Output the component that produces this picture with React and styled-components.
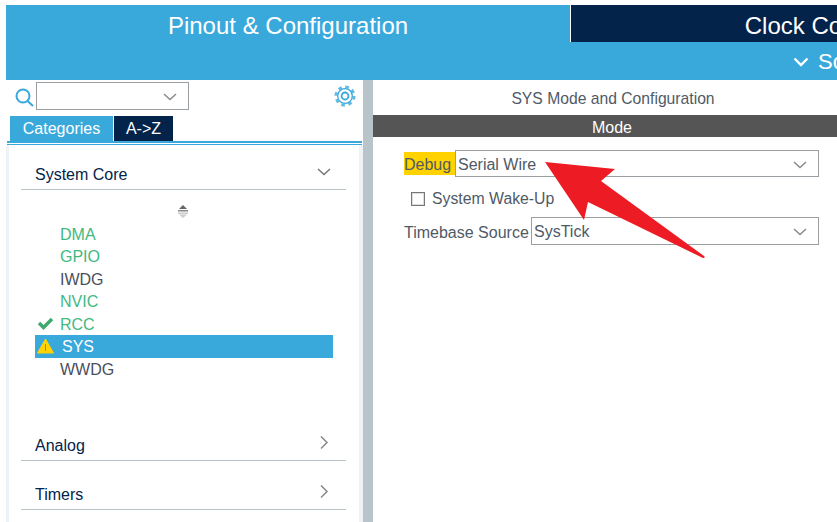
import styled, { createGlobalStyle } from "styled-components";

const GlobalStyle = createGlobalStyle`
  html, body {
    margin: 0;
    padding: 0;
    background: #fff;
    overflow: hidden;
  }
  * {
    box-sizing: border-box;
  }
`;

const BLUE = "#39a9dc";
const NAVY = "#03234b";
const GREY_TEXT = "#4f5a66";

const Page = styled.div`
  position: relative;
  width: 837px;
  height: 522px;
  overflow: hidden;
  padding-top: 5px;
  display: flex;
  flex-direction: column;
  font-family: "Liberation Sans", Arial, sans-serif;
  font-size: 16px;
`;

const Header = styled.header`
  margin-left: 6px;
  background: ${BLUE};
  height: 75px;
  flex-shrink: 0;
`;

const TabBar = styled.div`
  display: flex;
  height: 37px;
`;

const MainTab = styled.div`
  flex: 0 0 ${({ $width }) => $width}px;
  display: flex;
  justify-content: center;
  align-items: center;
  padding-top: 5px;
  color: #fff;
  font-size: 24px;
  white-space: nowrap;
  background: ${({ $active }) => ($active ? BLUE : NAVY)};
  border-left: ${({ $active }) => ($active ? "0" : "1px solid #fff")};
`;

const SubBar = styled.div`
  height: 38px;
  display: flex;
  align-items: center;
  gap: 9px;
  padding: 1px 0 0 787px;
  color: #fff;
  font-size: 22px;
  white-space: nowrap;
`;

const SubChevron = styled.svg`
  width: 16px;
  height: 10px;
  flex-shrink: 0;
`;

const Body = styled.div`
  flex: 1;
  display: flex;
  min-height: 0;
`;

const Sidebar = styled.aside`
  width: 363px;
  padding-left: 6px;
  display: flex;
  flex-direction: column;
`;

const SearchRow = styled.div`
  height: 36px;
  display: flex;
  align-items: flex-start;
  padding: 2px 7px 0 9px;
`;

const SearchIcon = styled.svg`
  width: 19px;
  height: 19px;
  margin-top: 6px;
  margin-right: 2px;
  flex-shrink: 0;
`;

const Select = styled.div`
  height: ${({ $height }) => $height}px;
  width: ${({ $width }) => $width}px;
  flex: none;
  border: 1px solid #9a9fa3;
  display: flex;
  align-items: center;
  justify-content: space-between;
  padding: 2px 11px 0 2px;
  color: ${GREY_TEXT};
  background: #fff;
`;

const Chevron = styled.svg`
  width: 14px;
  height: 8px;
  flex-shrink: 0;
`;

const GearIcon = styled.svg`
  width: 22px;
  height: 22px;
  margin-left: auto;
  margin-top: 3px;
`;

const ViewTabs = styled.div`
  display: flex;
  gap: 1px;
  height: 25px;
  padding-left: 4px;
`;

const ViewTab = styled.div`
  width: ${({ $width }) => $width}px;
  display: flex;
  align-items: center;
  justify-content: center;
  color: #fff;
  background: ${({ $active }) => ($active ? BLUE : NAVY)};
`;

const TabRule = styled.div`
  height: 4px;
  margin: 0 1px;
  border-top: 2px solid ${BLUE};
  border-bottom: 1px solid ${BLUE};
`;

const Tree = styled.div`
  flex: 1;
  display: flex;
  flex-direction: column;
  padding: 0 13px 0 12px;
  border-left: 3px solid #eff2f4;
  border-right: 4px solid #eff2f4;
`;

const Category = styled.div`
  height: 34px;
  flex-shrink: 0;
  margin-top: ${({ $gap }) => $gap}px;
  padding: 9px 15px 0 14px;
  display: flex;
  align-items: flex-start;
  justify-content: space-between;
  border-bottom: 1px solid #b8c4ca;
  color: ${NAVY};
  line-height: 20px;
`;

const CategoryIcon = styled.svg`
  width: 14px;
  height: 14px;
`;

const SortIcon = styled.svg`
  display: block;
  width: 12px;
  height: 15px;
  margin: 14px auto 3.5px;
  transform: translateX(-1px);
`;

const ItemList = styled.ul`
  list-style: none;
  margin: 0 13px 0 14px;
  padding: 0;
`;

const Item = styled.li`
  position: relative;
  height: 22.5px;
  display: flex;
  align-items: center;
  padding-top: 2px;
  padding-left: ${({ $selected }) => ($selected ? "27px" : "25px")};
  background: ${({ $selected }) => ($selected ? BLUE : "transparent")};
  color: ${({ $selected, $ok }) =>
    $selected ? "#fff" : $ok ? "#3fb97f" : "#4a4f5e"};
`;

const StatusIcon = styled.svg`
  position: absolute;
  left: 2px;
  top: 3px;
  width: 17px;
  height: 16px;
`;

const Splitter = styled.div`
  width: 10px;
  background: #b8c4ca;
`;

const Content = styled.main`
  flex: 1;
  min-width: 0;
  display: flex;
  flex-direction: column;
  color: ${GREY_TEXT};
`;

const PanelTitle = styled.div`
  height: 35px;
  display: flex;
  align-items: center;
  justify-content: center;
  padding: 2px 0 0 16px;
  font-size: 15.7px;
`;

const ModeBar = styled.div`
  height: 22px;
  display: flex;
  align-items: center;
  justify-content: center;
  padding: 3px 0 0 14px;
  background: #545554;
  color: #fff;
`;

const Form = styled.div`
  display: flex;
  flex-direction: column;
  padding: 13px 18px 0 31px;
`;

const FieldRow = styled.div`
  display: flex;
  align-items: center;
  justify-content: space-between;
`;

const Label = styled.span`
  padding: 4px 0 2px;
  height: 23px;
  line-height: 18px;
  white-space: nowrap;
  background: ${({ $highlight }) => ($highlight ? "#ffd200" : "transparent")};
  width: ${({ $highlight }) => ($highlight ? "51px" : "auto")};
`;

const CheckRow = styled.label`
  display: flex;
  align-items: center;
  gap: 7px;
  height: 40px;
  padding: 3px 0 0 7px;
  font-size: 15.8px;
`;

const CheckBox = styled.span`
  width: 14px;
  height: 14px;
  border: 1px solid #777;
  background: #fff;
  box-shadow: inset 0 0 0 1px #ddd;
`;

const Arrow = styled.svg`
  position: absolute;
  left: 540px;
  top: 155px;
  width: 170px;
  height: 110px;
`;

const ChevronDownIcon = () => (
  <Chevron viewBox="0 0 14 8">
    <polyline points="1,1 7,6.5 13,1" fill="none" stroke="#8a8a8a" strokeWidth="1.5" />
  </Chevron>
);

const categories = [
  { name: "Analog", gap: 47 },
  { name: "Timers", gap: 15 },
];

const items = [
  { name: "DMA", ok: true },
  { name: "GPIO", ok: true },
  { name: "IWDG" },
  { name: "NVIC", ok: true },
  { name: "RCC", ok: true, icon: "check" },
  { name: "SYS", selected: true, icon: "warning" },
  { name: "WWDG" },
];

const App = () => {
  return (
    <>
      <GlobalStyle />
      <Page>
        <Header>
          <TabBar>
            <MainTab $active $width={564}>Pinout &amp; Configuration</MainTab>
            <MainTab $width={558}>Clock Configuration</MainTab>
          </TabBar>
          <SubBar>
            <SubChevron viewBox="0 0 16 10">
              <polyline points="1.5,1.5 8,8 14.5,1.5" fill="none" stroke="#fff" strokeWidth="2.4" />
            </SubChevron>
            Software Packs
          </SubBar>
        </Header>
        <Body>
          <Sidebar>
            <SearchRow>
              <SearchIcon viewBox="0 0 19 19">
                <circle cx="8" cy="8" r="6.5" fill="none" stroke={BLUE} strokeWidth="2" />
                <line x1="12.5" y1="13" x2="18" y2="18" stroke={BLUE} strokeWidth="2" />
              </SearchIcon>
              <Select $height={28} $width={153}>
                <span />
                <ChevronDownIcon />
              </Select>
              <GearIcon viewBox="0 0 24 24" fill="none" stroke={BLUE}>
                <circle cx="12" cy="12" r="10" strokeWidth="3" strokeDasharray="4 3.85" opacity="0.8" />
                <circle cx="12" cy="12" r="8" strokeWidth="1.4" />
                <circle cx="12" cy="12" r="3.8" strokeWidth="2" />
              </GearIcon>
            </SearchRow>
            <ViewTabs>
              <ViewTab $active $width={103}>Categories</ViewTab>
              <ViewTab $width={59}>A-&gt;Z</ViewTab>
            </ViewTabs>
            <TabRule />
            <Tree>
              <Category $gap={11}>
                System Core
                <CategoryIcon viewBox="0 0 14 14">
                  <polyline points="1,4 7,9.5 13,4" fill="none" stroke="#777" strokeWidth="1.5" />
                </CategoryIcon>
              </Category>
              <SortIcon viewBox="0 0 12 15">
                <path d="M6 1 L10 5 H2 Z" fill="#666" />
                <rect x="1" y="6" width="10" height="1.5" fill="#888" />
                <rect x="1" y="8.5" width="10" height="1.5" fill="#ccc" />
                <path d="M6 14 L10 10.5 H2 Z" fill="#ccc" />
              </SortIcon>
              <ItemList>
                {items.map((item) => (
                  <Item key={item.name} $ok={item.ok} $selected={item.selected}>
                    {item.icon === "check" && (
                      <StatusIcon viewBox="0 0 17 16">
                        <polyline points="2,7 6.5,11.5 15,3" fill="none" stroke="#3fa86f" strokeWidth="3.4" />
                      </StatusIcon>
                    )}
                    {item.icon === "warning" && (
                      <StatusIcon viewBox="0 0 17 16">
                        <path d="M8.5 1 L16.5 15 H0.5 Z" fill="#ffd200" stroke="#ffd200" strokeLinejoin="round" />
                        <rect x="8" y="6" width="1" height="7" fill="#a88f10" />
                      </StatusIcon>
                    )}
                    {item.name}
                  </Item>
                ))}
              </ItemList>
              {categories.map((category) => (
                <Category key={category.name} $gap={category.gap}>
                  {category.name}
                  <CategoryIcon viewBox="0 0 14 14">
                    <polyline points="4,0.5 10,6.5 4,12.5" fill="none" stroke="#888" strokeWidth="1.5" />
                  </CategoryIcon>
                </Category>
              ))}
            </Tree>
          </Sidebar>
          <Splitter />
          <Content>
            <PanelTitle>SYS Mode and Configuration</PanelTitle>
            <ModeBar>Mode</ModeBar>
            <Form>
              <FieldRow>
                <Label $highlight>Debug</Label>
                <Select $height={27} $width={364}>
                  Serial Wire
                  <ChevronDownIcon />
                </Select>
              </FieldRow>
              <CheckRow>
                <CheckBox />
                System Wake-Up
              </CheckRow>
              <FieldRow>
                <Label>Timebase Source</Label>
                <Select $height={28} $width={288}>
                  SysTick
                  <ChevronDownIcon />
                </Select>
              </FieldRow>
            </Form>
          </Content>
        </Body>
        <Arrow viewBox="540 155 170 110">
          <path
            d="M545 162 L615 169 L601 181 L704 256 Q706 258 703 258 L588 202 L584 220 Z"
            fill="#ed1c24"
          />
        </Arrow>
      </Page>
    </>
  );
};

export default App;
